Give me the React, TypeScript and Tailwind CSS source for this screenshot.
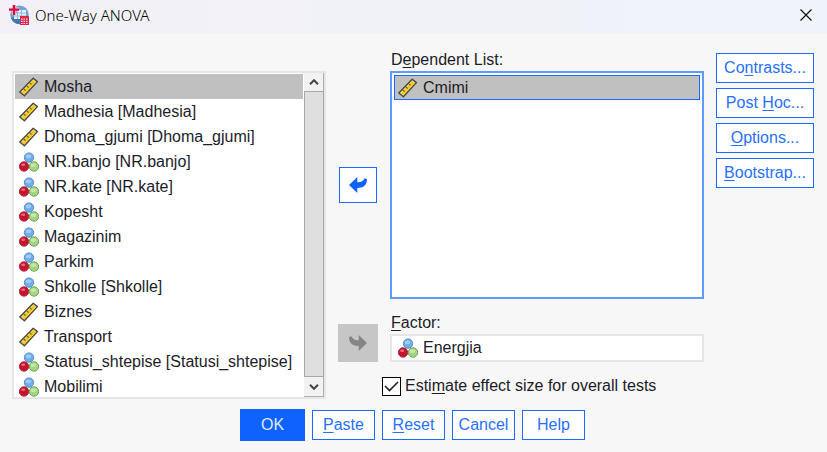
import React, { useState } from "react";

type Measure = "scale" | "nominal";
type Variable = { label: string; measure: Measure };

const variables: Variable[] = [
  { label: "Mosha", measure: "scale" },
  { label: "Madhesia [Madhesia]", measure: "scale" },
  { label: "Dhoma_gjumi [Dhoma_gjumi]", measure: "scale" },
  { label: "NR.banjo [NR.banjo]", measure: "nominal" },
  { label: "NR.kate [NR.kate]", measure: "nominal" },
  { label: "Kopesht", measure: "nominal" },
  { label: "Magazinim", measure: "nominal" },
  { label: "Parkim", measure: "nominal" },
  { label: "Shkolle [Shkolle]", measure: "nominal" },
  { label: "Biznes", measure: "scale" },
  { label: "Transport", measure: "scale" },
  { label: "Statusi_shtepise [Statusi_shtepise]", measure: "nominal" },
  { label: "Mobilimi", measure: "nominal" },
];

function MeasureIcon({ measure }: { measure: Measure }) {
  if (measure === "scale") {
    return (
      <svg viewBox="0 0 20 20" className="size-5 shrink-0" aria-hidden="true">
        <path d="M.8 15 14.2 1.2 18.4 4.6 5.4 18.8Z" fill="#e8dc8a" stroke="#4a4a38" strokeWidth="1.4" strokeLinejoin="round" />
        <path d="M3.2 15.2 14.2 3.6 16.2 5.2 5.4 16.8Z" fill="#ffc60a" />
        <path d="m4.8 12 1.8 1.6M7.8 8.9l1.8 1.6M10.8 5.8l1.8 1.6" stroke="#6b5f24" strokeWidth="1.1" />
      </svg>
    );
  }
  return (
    <svg viewBox="0 0 20 20" className="size-5 shrink-0" aria-hidden="true">
      <circle cx="10" cy="5.6" r="4.7" fill="#70aeea" stroke="#5790d0" />
      <ellipse cx="9.5" cy="4.3" rx="2.8" ry="1.9" fill="#a0ccf5" />
      <circle cx="5" cy="14.5" r="4.7" fill="#c5142b" stroke="#b02a3c" />
      <ellipse cx="4.2" cy="12.8" rx="2" ry="1.3" fill="#e87080" />
      <circle cx="15" cy="14.5" r="4.7" fill="#a3d485" stroke="#6aa64a" />
      <ellipse cx="14.5" cy="13.2" rx="2.8" ry="1.9" fill="#c4e6ac" />
    </svg>
  );
}

function AppIcon() {
  return (
    <svg viewBox="0 0 20 20" className="size-5" aria-hidden="true">
      <circle cx="10.5" cy="9.8" r="9.3" fill="#6ea3d2" />
      <path d="M2 13a9 9 0 0 0 10 6V9Z" fill="#3f78b5" />
      <path d="M8 5h9v9H5V8h3Z" fill="#e6f1fa" />
      <path d="M5 11h12M8.5 5v9M12.5 5v9M6 8h11" stroke="#8fb6da" />
      <path d="M5 0v10M0 4.6h10" stroke="#f5d5df" strokeWidth="4" />
      <path d="M5 0v10M0 4.6h10" stroke="#d40f3c" strokeWidth="2.4" />
      <path d="M11 11h9v9h-9Z" fill="#d62a4d" />
      <path d="M12 14.2h7M12 16.4h7M12 18.5h7" stroke="#ffd6df" strokeWidth="1.2" strokeDasharray="1.5 1" />
    </svg>
  );
}

function Mnemonic({ text, at }: { text: string; at?: number }) {
  if (at === undefined) return <>{text}</>;
  return (
    <span>
      {text.slice(0, at)}
      <span className="underline decoration-1 underline-offset-2">{text[at]}</span>
      {text.slice(at + 1)}
    </span>
  );
}

function OutlineButton({ text, at, className }: { text: string; at?: number; className: string }) {
  return (
    <button
      type="button"
      className={`border border-[#1a6aff] bg-white text-center whitespace-nowrap text-[#2870ff] ${className}`}
    >
      <Mnemonic text={text} at={at} />
    </button>
  );
}

export default function App() {
  const [selected, setSelected] = useState(0);
  const [effectSize, setEffectSize] = useState(true);

  return (
    <div className="min-h-screen bg-[#f7f7f7] font-['Liberation_Sans',Arial,sans-serif] text-[16px] leading-5 text-[#1c1c28]">
      <header className="flex h-[34px] items-center bg-linear-to-r from-[#f3f1f7] to-[#eff3fa] pr-3 pb-1 pl-[9px]">
        <AppIcon />
        <h1 className="ml-[6px] flex-1 font-['Noto_Sans','Open_Sans',sans-serif] text-[15px] font-light text-black">One-Way ANOVA</h1>
        <button type="button" aria-label="Close" className="p-[3px]">
          <svg viewBox="0 0 12 12" className="size-3" aria-hidden="true">
            <path d="m.5.5 11 11m0-11-11 11" stroke="#111" strokeWidth="1.2" />
          </svg>
        </button>
      </header>

      <main className="grid grid-cols-[1fr_40px_1fr_98px] gap-x-3 pt-4 pr-[13px] pl-3">
        <div className="mt-[21px] flex h-[328px] border-2 border-[#e6e6e6] bg-white">
          <ul role="listbox" aria-label="Variables" className="min-w-0 flex-1 overflow-hidden pt-px pl-px">
            {variables.map((v, i) => (
              <li
                key={v.label}
                role="option"
                aria-selected={i === selected}
                onClick={() => setSelected(i)}
                className={`flex h-[25px] items-center gap-[5px] pl-1 whitespace-nowrap ${i === selected ? "bg-[#c0c0c0]" : ""}`}
              >
                <MeasureIcon measure={v.measure} />
                {v.label}
              </li>
            ))}
          </ul>
          <div className="ml-px flex w-5 flex-col bg-[#f2f2f2]">
            <button type="button" aria-label="Scroll up" className="flex h-[18px] items-center justify-center border-r border-[#b0b0b0]">
              <svg viewBox="0 0 10 6" className="h-[6px] w-[10px]" aria-hidden="true">
                <path d="m1 5.2 4-4 4 4" fill="none" stroke="#444" strokeWidth="2" />
              </svg>
            </button>
            <div className="flex-1 border border-[#a8a8a8] bg-[#dfdfdf]" />
            <button type="button" aria-label="Scroll down" className="flex h-5 items-center justify-center border-r border-b border-[#b0b0b0]">
              <svg viewBox="0 0 10 6" className="h-[6px] w-[10px]" aria-hidden="true">
                <path d="m1 .8 4 4 4-4" fill="none" stroke="#444" strokeWidth="2" />
              </svg>
            </button>
          </div>
        </div>

        <div className="flex flex-col items-center justify-between pt-[117px] pb-[37px]">
          <button type="button" aria-label="Move back from Dependent List" className="flex h-9 w-[38px] items-center justify-center border border-[#1a6aff] bg-white">
            <svg viewBox="0 0 18 16" className="h-4 w-[18px]" aria-hidden="true">
              <path d="M0 8 8.3 0v5.2C12 5.5 14 4 15.6 1.2L18 2c0 6-3.5 9-9.7 9v5Z" fill="#0f62fe" />
            </svg>
          </button>
          <button type="button" disabled aria-label="Move into Factor" className="flex h-[38px] w-10 items-center justify-center bg-[#c6c6c6]">
            <svg viewBox="0 0 18 16" className="h-4 w-[18px]" aria-hidden="true">
              <path d="M18 8 9.7 0v5.2C6 5.5 4 4 2.4 1.2L0 2c0 6 3.5 9 9.7 9v5Z" fill="#858585" />
            </svg>
          </button>
        </div>

        <div className="flex flex-col">
          <h2 id="dependent" className="h-[21px] pl-px">
            <Mnemonic text="Dependent List:" at={1} />
          </h2>
          <ul role="listbox" aria-labelledby="dependent" className="h-[228px] border-2 border-[#5f9aff] bg-white p-[2px]">
            <li role="option" aria-selected="true" className="flex h-[25px] items-center gap-[5px] border border-[#1a6aff] bg-[#c0c0c0] pl-[3px]">
              <MeasureIcon measure="scale" />
              Cmimi
            </li>
          </ul>
          <label htmlFor="factor" className="mt-[14px] h-[21px] pl-px">
            <Mnemonic text="Factor:" at={0} />
          </label>
          <div className="flex h-7 items-center gap-[5px] border-2 border-[#e6e6e6] bg-white pl-[6px]">
            <MeasureIcon measure="nominal" />
            <input id="factor" readOnly value="Energjia" className="min-w-0 flex-1 bg-transparent outline-none" />
          </div>
          <label className="mt-[14px] -ml-2 flex items-center gap-1 whitespace-nowrap">
            <span className="grid size-[19px]">
              <input
                type="checkbox"
                checked={effectSize}
                onChange={(e) => setEffectSize(e.target.checked)}
                className="peer col-start-1 row-start-1 size-[19px] appearance-none border border-black bg-white"
              />
              <svg viewBox="0 0 19 19" className="pointer-events-none invisible col-start-1 row-start-1 size-[19px] peer-checked:visible" aria-hidden="true">
                <path d="m3 9 4.5 4.5L16 5" fill="none" stroke="#222" strokeWidth="1.6" />
              </svg>
            </span>
            <Mnemonic text="Estimate effect size for overall tests" at={4} />
          </label>
        </div>

        <div className="flex flex-col gap-[5px] pt-[3px]">
          <OutlineButton text="Contrasts..." at={2} className="h-[30px]" />
          <OutlineButton text="Post Hoc..." at={5} className="h-[30px]" />
          <OutlineButton text="Options..." at={0} className="h-[30px]" />
          <OutlineButton text="Bootstrap..." at={0} className="h-[30px]" />
        </div>
      </main>

      <footer className="mt-[10px] flex items-center justify-center gap-[7px] pr-[2px]">
        <button type="button" className="h-8 w-[65px] bg-[#0f62fe] text-[#dfeaff]">OK</button>
        <OutlineButton text="Paste" at={0} className="h-[30px] w-[63px]" />
        <OutlineButton text="Reset" at={0} className="h-[30px] w-[63px]" />
        <OutlineButton text="Cancel" className="h-[30px] w-[63px]" />
        <OutlineButton text="Help" className="h-[30px] w-[63px]" />
      </footer>
    </div>
  );
}
